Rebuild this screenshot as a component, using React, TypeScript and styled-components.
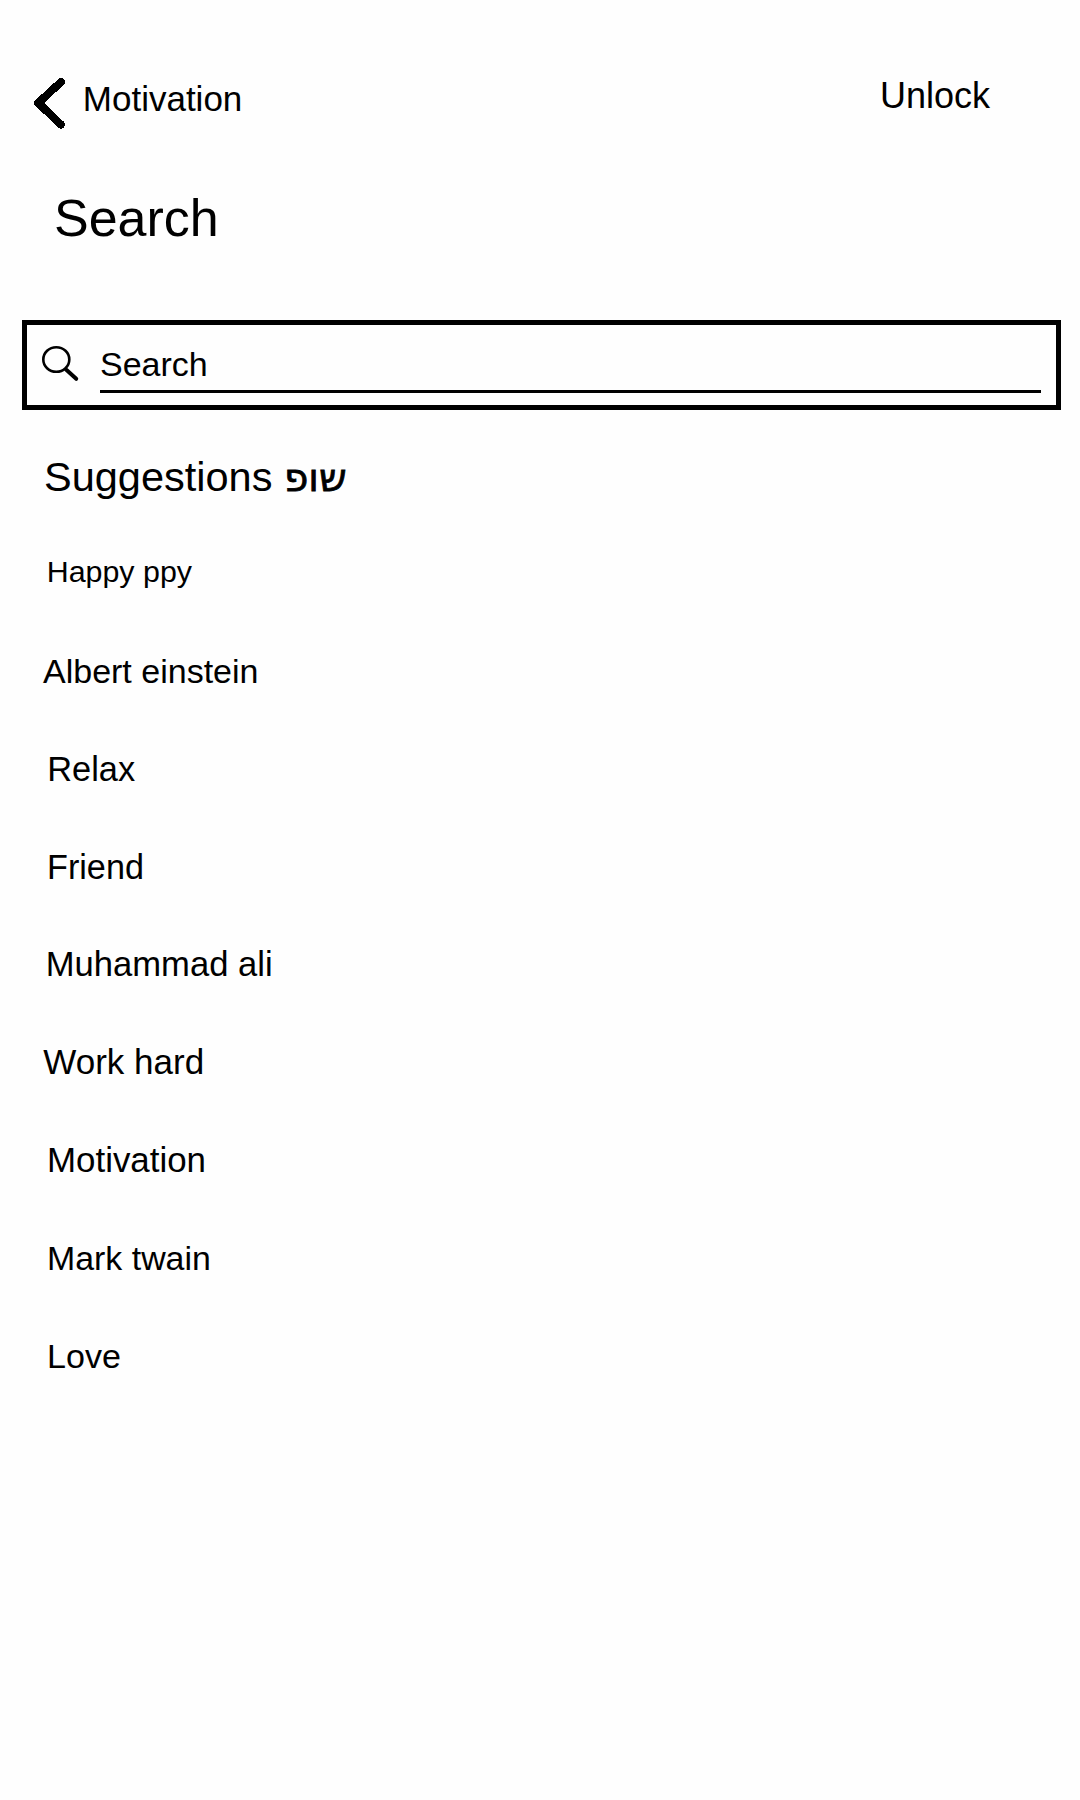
import React from "react";
import styled, { createGlobalStyle } from "styled-components";

const GlobalStyle = createGlobalStyle`
  * { box-sizing: border-box; }
  body {
    margin: 0;
    background: #fefefe;
    color: #000;
    font-family: "Liberation Sans", Arial, sans-serif;
  }
`;

const Page = styled.main`
  display: flex;
  flex-direction: column;
  width: 1080px;
  height: 1800px;
  background: #fefefe;
  overflow: hidden;
`;

const TopBar = styled.header`
  display: flex;
  justify-content: space-between;
  align-items: flex-start;
  height: 170px;
  padding: 76px 90px 0 32px;
`;

const BackButton = styled.button`
  display: flex;
  align-items: flex-start;
  padding: 0;
  border: 0;
  background: none;
  color: inherit;
  font: inherit;
`;

const BackLabel = styled.span`
  margin-left: 14.8px;
  padding-top: 3px;
  font-size: 35px;
  line-height: 40px;
`;

const UnlockLink = styled.span`
  font-size: 36px;
  line-height: 40px;
`;

const Title = styled.h1`
  margin: 0;
  padding-left: 54px;
  height: 150px;
  font-size: 52px;
  font-weight: 400;
  line-height: 96px;
`;

const SearchBox = styled.label`
  display: flex;
  width: 1039px;
  height: 90px;
  margin-left: 22px;
  padding: 17px 15px 0 12px;
  border: 5px solid #000;
`;

const SearchField = styled.span`
  flex: 1;
  height: 51px;
  margin-left: 17px;
  border-bottom: 3px solid #000;
  font-size: 34px;
  line-height: 44px;
`;

const SectionTitle = styled.h2`
  margin: 0;
  padding: 42px 0 0 44px;
  height: 115px;
  font-size: 41.5px;
  font-weight: 400;
  line-height: 49px;
`;

const Hebrew = styled.span`
  font-family: "DejaVu Sans", sans-serif;
  font-size: 39px;
  line-height: 1;
  -webkit-text-stroke: 0.8px #000;
`;

const SuggestionList = styled.ul`
  display: flex;
  flex-direction: column;
  margin: 0;
  padding: 0;
  list-style: none;
`;

const Suggestion = styled.li<{ $indent: number; $size: number; $lift?: number }>`
  display: flex;
  align-items: center;
  height: 97.8px;
  padding-left: ${(p) => p.$indent}px;
  padding-bottom: ${(p) => p.$lift ?? 0}px;
  font-size: ${(p) => p.$size}px;
  line-height: 40px;
`;

const suggestions = [
  { text: "Happy ppy", indent: 46.7, size: 30.4, lift: 6 },
  { text: "Albert einstein", indent: 43, size: 34, lift: 1 },
  { text: "Relax", indent: 47.2, size: 34.4 },
  { text: "Friend", indent: 47, size: 34.2 },
  { text: "Muhammad ali", indent: 45.8, size: 34.6, lift: 2 },
  { text: "Work hard", indent: 43.3, size: 35, lift: 1 },
  { text: "Motivation", indent: 47, size: 34.9, lift: 1 },
  { text: "Mark twain", indent: 47, size: 33.9, lift: 1 },
  { text: "Love", indent: 47, size: 34.1, lift: 1 },
];

function ChevronIcon() {
  return (
    <svg width="36" height="56" viewBox="0 0 36 56" fill="none" shapeRendering="crispEdges">
      <path
        d="M29 6 L6.2 27 L29 48.6"
        stroke="#000"
        strokeWidth="8"
        strokeLinecap="round"
        strokeLinejoin="round"
      />
    </svg>
  );
}

function SearchIcon() {
  return (
    <svg width="44" height="44" viewBox="39 342 44 44" fill="none">
      <ellipse cx="56.3" cy="359.5" rx="13" ry="12.3" stroke="#000" strokeWidth="2.6" />
      <path d="M66.3 369.8 L76.2 378.8" stroke="#000" strokeWidth="4" strokeLinecap="round" />
    </svg>
  );
}

export default function App() {
  return (
    <Page>
      <GlobalStyle />
      <TopBar>
        <BackButton>
          <ChevronIcon />
          <BackLabel>Motivation</BackLabel>
        </BackButton>
        <UnlockLink>Unlock</UnlockLink>
      </TopBar>
      <Title>Search</Title>
      <SearchBox>
        <SearchIcon />
        <SearchField>Search</SearchField>
      </SearchBox>
      <SectionTitle>
        Suggestions <Hebrew lang="he">שופ</Hebrew>
      </SectionTitle>
      <SuggestionList>
        {suggestions.map((s) => (
          <Suggestion key={s.text} $indent={s.indent} $size={s.size} $lift={s.lift}>
            {s.text}
          </Suggestion>
        ))}
      </SuggestionList>
    </Page>
  );
}
